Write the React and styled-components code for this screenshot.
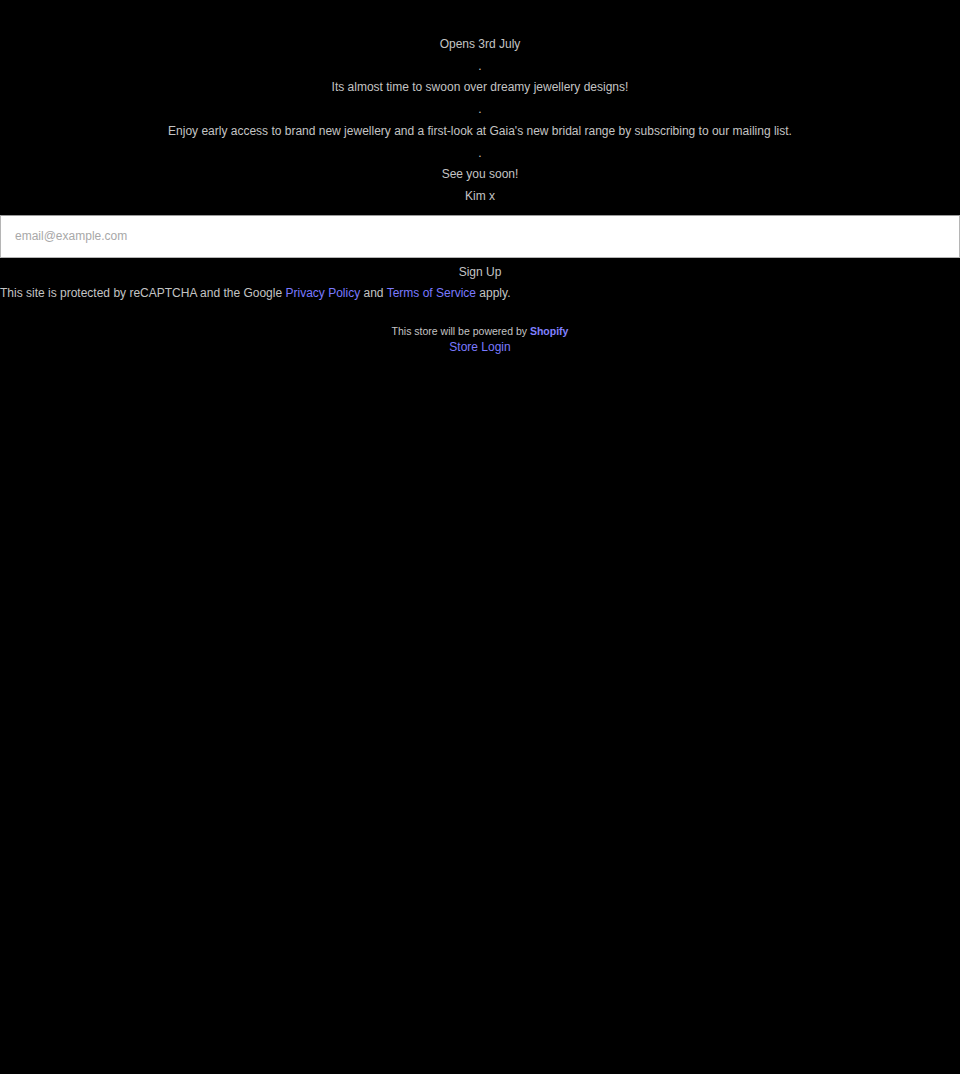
import React from "react";
import styled, { createGlobalStyle } from "styled-components";

const Global = createGlobalStyle`
  html, body { margin: 0; padding: 0; background: #000; }
  body { font-family: "Liberation Sans", Arial, sans-serif; color: #c4c4c4; }
`;

const Page = styled.div`
  background: #000;
  min-height: 1074px;
  padding-top: 34px;
  box-sizing: border-box;
`;

const Message = styled.div`
  text-align: center;
  font-size: 12px;
  line-height: 21.7px;
`;

const Line = styled.div``;

const Form = styled.form`
  margin: 7px 0 0;
  display: flex;
  flex-direction: column;
`;

const EmailInput = styled.input`
  display: block;
  width: 100%;
  box-sizing: border-box;
  height: 43px;
  border: 1px solid #b5b5b5;
  border-top-color: #9a9a9a;
  background: #fff;
  padding: 0 14px;
  font-family: "Liberation Sans", Arial, sans-serif;
  font-size: 12px;
  color: #333;
  outline: none;
  &::placeholder { color: #a8a8a8; }
`;

const SubmitButton = styled.button`
  background: transparent;
  border: 0;
  color: #c4c4c4;
  font-family: "Liberation Sans", Arial, sans-serif;
  font-size: 12px;
  line-height: 21px;
  padding: 0;
  margin-top: 4px;
  cursor: pointer;
`;

const Notice = styled.p`
  margin: 0;
  font-size: 12px;
  line-height: 21px;
`;

const Link = styled.a`
  color: ${(p) => (p.$strong ? "#8080ff" : "#7a7aff")};
  text-decoration: none;
  font-weight: ${(p) => (p.$strong ? "bold" : "normal")};
`;

const Footer = styled.div`
  margin-top: 19px;
  text-align: center;
  font-size: 10.5px;
  line-height: 16px;
`;

const LoginLink = styled.a`
  display: block;
  color: #7a7aff;
  font-size: 12px;
  line-height: 16px;
  text-decoration: none;
`;

export default function App() {
  return (
    <>
      <Global />
      <Page>
        <Message>
          <Line>Opens 3rd July</Line>
          <Line>.</Line>
          <Line>Its almost time to swoon over dreamy jewellery designs!</Line>
          <Line>.</Line>
          <Line>
            Enjoy early access to brand new jewellery and a first-look at Gaia's new bridal range by subscribing to our mailing list.
          </Line>
          <Line>.</Line>
          <Line>See you soon!</Line>
          <Line>Kim x</Line>
        </Message>
        <Form onSubmit={(e) => e.preventDefault()}>
          <EmailInput type="email" placeholder="email@example.com" />
          <SubmitButton type="submit">Sign Up</SubmitButton>
        </Form>
        <Notice>
          This site is protected by reCAPTCHA and the Google{" "}
          <Link href="#">Privacy Policy</Link> and{" "}
          <Link href="#">Terms of Service</Link> apply.
        </Notice>
        <Footer>
          This store will be powered by <Link href="#" $strong>Shopify</Link>
          <LoginLink href="#">Store Login</LoginLink>
        </Footer>
      </Page>
    </>
  );
}
